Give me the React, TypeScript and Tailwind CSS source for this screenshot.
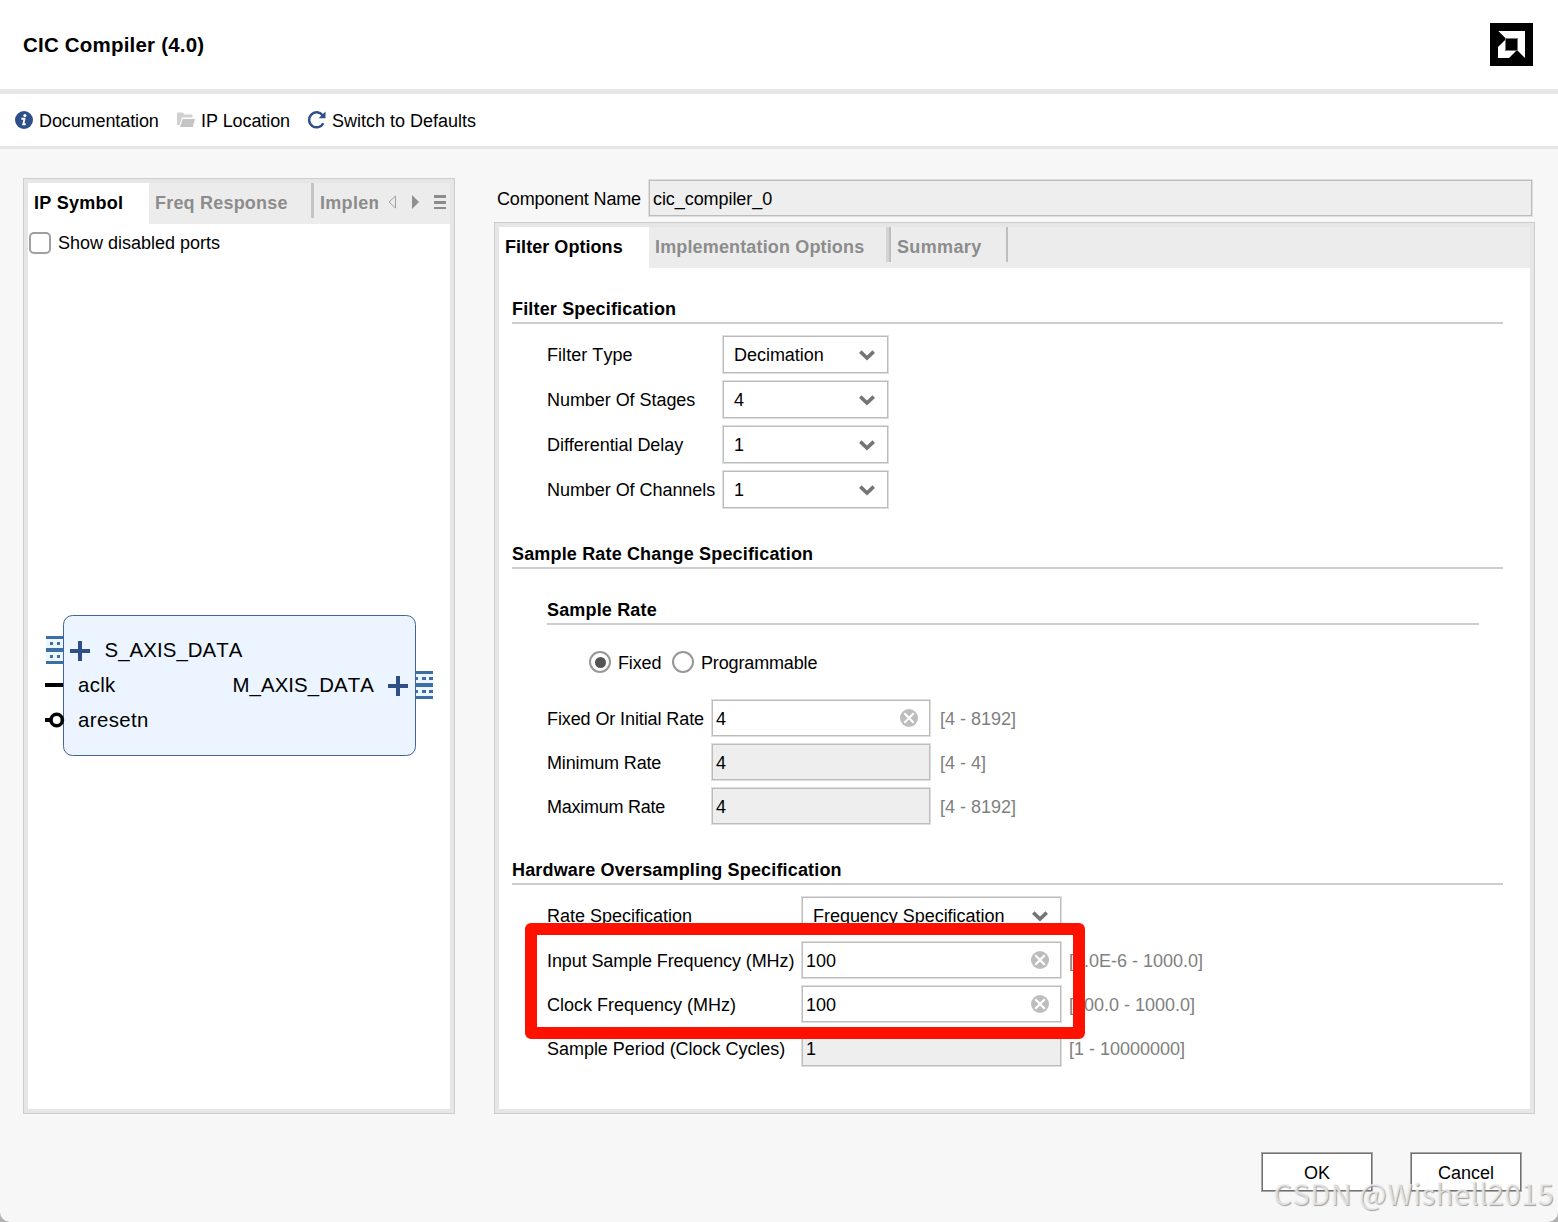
import type { ReactNode } from "react";

const BOX = "border border-[#dedede] shadow-[inset_0_0_0_1px_#bcbcbc]";

function Chevron() {
	return (
		<svg width="17" height="12" viewBox="0 0 17 12" className="shrink-0">
			<path d="M1.3 2.6 8 9 14.7 2.6" fill="none" stroke="#757575" strokeWidth="3.6" />
		</svg>
	);
}

function ClearIcon() {
	return (
		<svg width="18" height="18" viewBox="0 0 18 18" className="shrink-0">
			<circle cx="9" cy="9" r="9" fill="#bdbdbd" />
			<path d="M4.3 4.3 13.7 13.7M13.7 4.3 4.3 13.7" stroke="#fff" strokeWidth="2.1" />
		</svg>
	);
}

function Select({ value, className }: { value: string; className: string }) {
	return (
		<div className={`flex h-[39px] items-center justify-between bg-white pl-[11px] pr-[12px] ${BOX} ${className}`}>
			<span className="tracking-[-0.03px]">{value}</span>
			<Chevron />
		</div>
	);
}

function Field({ value, disabled, className }: { value: string; disabled?: boolean; className: string }) {
	return (
		<div
			className={`flex h-[38px] items-center justify-between pl-1 pr-[12px] ${BOX} ${disabled ? "bg-[#eeeeee]" : "bg-white"} ${className}`}
		>
			<span className="pt-[2px]">{value}</span>
			{!disabled && <ClearIcon />}
		</div>
	);
}

function Row({ label, width, range, children }: { label: string; width: string; range?: string; children: ReactNode }) {
	return (
		<div className="flex items-center">
			<span className={`shrink-0 whitespace-nowrap ${width}`}>{label}</span>
			{children}
			{range && <span className="pl-[9px] pt-[2px] text-[#808080]">{range}</span>}
		</div>
	);
}

function Title({ children, className }: { children: ReactNode; className: string }) {
	return (
		<h2 className={`h-[29px] border-b-2 border-[#cdcdcd] font-bold leading-[29px] tracking-[0.16px] ${className}`}>{children}</h2>
	);
}

function AmdLogo() {
	return (
		<svg width="43" height="43" viewBox="0 0 43 43">
			<rect width="43" height="43" fill="#000" />
			<path d="M8.3 8H35V35L27.5 27.5V15.3H15.6Z" fill="#fff" />
			<path d="M8 24 15.6 16.4V27.5H26.5L19 35H8Z" fill="#fff" />
			<rect x="15.5" y="15.5" width="12" height="12" fill="#000" stroke="#777" />
		</svg>
	);
}

function Toolbar() {
	return (
		<div className="flex h-[55px] items-center border-b-[3px] border-[#e6e6e6] bg-white pl-[15px]">
			<svg width="18" height="18" viewBox="0 0 18 18">
				<circle cx="9" cy="9" r="9" fill="#2f4f8a" />
				<circle cx="9.9" cy="4.5" r="1.6" fill="#fff" />
				<path d="M6.3 7.7H9.5L8.3 13.3H10.7" fill="none" stroke="#fff" strokeWidth="1.9" />
			</svg>
			<span className="ml-[6px] w-[138px] pt-[2px] tracking-[-0.1px]">Documentation</span>
			<svg width="18" height="16" viewBox="0 0 18 16">
				<path d="M0 1.5Q0 .5 1 .5H5.5L7.5 2.5H14.5Q15.5 2.5 15.5 3.5V5.5H5L2.5 13H1Q0 13 0 12Z" fill="#d0d0d0" />
				<path d="M5.7 7H18L15.8 15H3Z" fill="#c4c4c4" />
			</svg>
			<span className="ml-[6px] w-[106px] pt-[2px] tracking-[-0.1px]">IP Location</span>
			<svg width="20" height="20" viewBox="0 0 20 20">
				<path d="M15.6 5.3A7.5 7.5 0 1 0 16.3 13.2" fill="none" stroke="#2f4f8a" strokeWidth="2.5" />
				<path d="M18.5 1.6V8.2H11.6Z" fill="#2f4f8a" />
			</svg>
			<span className="ml-[5px] pt-[2px]">Switch to Defaults</span>
		</div>
	);
}

function IpSymbol() {
	return (
		<svg width="392" height="142" viewBox="0 0 392 142" className="ml-4 mt-[362px]" fontSize="20.4" fill="#000">
			<rect x="19.5" y=".5" width="352" height="140" rx="9" fill="#ecf5ff" stroke="#41639f" />
			<g fill="#edf5fd">
				<rect x="2" y="21" width="17" height="28" />
				<rect x="372" y="56" width="17" height="28" />
			</g>
			<g stroke="#3d6fa5" strokeWidth="3">
				<path d="M2 22.5H19M2 47.5H19M372 57.5H389M372 82.5H389" />
				<path d="M2 35H19M372 70H389" strokeWidth="4" />
				<path d="M6 28.5H9M13 28.5H16M6 41.5H9M13 41.5H16" />
				<path d="M372 63.5H374M378 63.5H382M385 63.5H389M372 76.5H374M378 76.5H382M385 76.5H389" />
			</g>
			<path d="M26 36H46M36 26V46M344 71H364M354 61V81" stroke="#314f87" strokeWidth="4" />
			<path d="M1 70H19M1 105H7" stroke="#000" strokeWidth="4" />
			<circle cx="12.7" cy="105" r="5.7" fill="#fff" stroke="#000" strokeWidth="3.6" />
			<text x="60.5" y="42" className="tracking-[0.08px]">S_AXIS_DATA</text>
			<text x="34" y="77" className="tracking-[0.3px]">aclk</text>
			<text x="188.5" y="77" className="tracking-[0.08px]">M_AXIS_DATA</text>
			<text x="34" y="112" className="tracking-[0.4px]">aresetn</text>
		</svg>
	);
}

function LeftPanel() {
	return (
		<section className="h-[936px] w-[432px] border border-[#cdcdcd] bg-[#e6e6e6] p-1">
			<div className="h-full bg-white">
				<div className="flex h-[41px] bg-[#ececec] font-bold leading-[41px] text-[#8c8c8c]">
					<div className="w-[121px] bg-white pl-[6px] tracking-[0.25px] text-black">IP Symbol</div>
					<div className="h-[35px] w-[165px] border-r-[3px] border-[#c3c3c3] pl-[6px] tracking-[0.2px] whitespace-nowrap">Freq Response</div>
					<div className="ml-[6px] w-[58px] overflow-hidden tracking-[0.3px]">Implementation</div>
					<svg width="58" height="14" viewBox="0 0 58 14" className="ml-[10px] mt-3">
						<path d="M7.5 1V13L1 7Z" fill="none" stroke="#a0a0a0" />
						<path d="M24 0 31 7 24 14Z" fill="#8f8f8f" />
						<path d="M46 1.5H58M46 7.5H58M46 13.5H58" stroke="#8c8c8c" strokeWidth="3" />
					</svg>
				</div>
				<label className="flex h-[37px] items-center pl-[1px]">
					<span className="h-[22px] w-[22px] rounded-[5px] border-2 border-[#a0a0a0] bg-white" />
					<span className="ml-[7px]">Show disabled ports</span>
				</label>
				<div className="-mt-[8px]">
					<IpSymbol />
				</div>
			</div>
		</section>
	);
}

function RightPanel() {
	return (
		<section className="h-[892px] border border-[#cdcdcd] bg-[#e6e6e6] p-1">
			<div className="h-full bg-white">
				<div className="flex h-[41px] bg-[#ececec] font-bold leading-[41px] tracking-[0.15px] text-[#8c8c8c]">
					<div className="w-[150px] bg-white pl-[6px] tracking-[0.05px] text-black">Filter Options</div>
					<div className="h-[35px] w-[240px] border-r-[3px] border-[#d4d4d4] pl-[6px]">Implementation Options</div>
					<div className="h-[35px] w-[119px] border-x-2 border-[#bebebe] pl-[6px] tracking-[0.35px]">Summary</div>
				</div>
				<div className="pl-[13px] pr-[27px] pt-[27px]">
					<Title className="">Filter Specification</Title>
					<div className="mt-[11px] flex flex-col gap-[6px] pl-[35px] tracking-[-0.05px]">
						<Row label="Filter Type" width="w-[175px] tracking-[0.05px]"><Select value="Decimation" className="w-[167px]" /></Row>
						<Row label="Number Of Stages" width="w-[175px]"><Select value="4" className="w-[167px]" /></Row>
						<Row label="Differential Delay" width="w-[175px]"><Select value="1" className="w-[167px]" /></Row>
						<Row label="Number Of Channels" width="w-[175px]"><Select value="1" className="w-[167px]" /></Row>
					</div>

					<Title className="mt-[31px]">Sample Rate Change Specification</Title>
					<Title className="ml-[35px] mr-6 mt-[27px]">Sample Rate</Title>
					<div className="ml-[77px] mt-[26px] flex h-[22px] items-center tracking-[-0.15px]">
						<span className="flex h-[22px] w-[22px] items-center justify-center rounded-full border-2 border-[#979797]">
							<span className="h-[11px] w-[11px] rounded-full bg-[#545454]" />
						</span>
						<span className="ml-[7px] w-[54px] pt-[2px]">Fixed</span>
						<span className="h-[22px] w-[22px] rounded-full border-2 border-[#979797]" />
						<span className="ml-[7px] pt-[2px]">Programmable</span>
					</div>
					<div className="mt-[26px] flex flex-col gap-[6px] pl-[35px]">
						<Row label="Fixed Or Initial Rate" width="w-[164px] pt-[2px] tracking-[-0.1px]" range="[4 - 8192]"><Field value="4" className="w-[220px]" /></Row>
						<Row label="Minimum Rate" width="w-[164px] pt-[2px] tracking-[-0.15px]" range="[4 - 4]"><Field value="4" disabled className="w-[220px]" /></Row>
						<Row label="Maximum Rate" width="w-[164px] pt-[2px] tracking-[-0.25px]" range="[4 - 8192]"><Field value="4" disabled className="w-[220px]" /></Row>
					</div>

					<Title className="mt-[31px]">Hardware Oversampling Specification</Title>
					<div className="relative mt-[11px] flex flex-col gap-[6px] pl-[35px]">
						<Row label="Rate Specification" width="w-[254px]"><Select value="Frequency Specification" className="w-[261px]" /></Row>
						<Row label="Input Sample Frequency (MHz)" width="w-[254px] pt-[2px] tracking-[-0.1px]" range="[1.0E-6 - 1000.0]"><Field value="100" className="mr-[-2px] w-[261px]" /></Row>
						<Row label="Clock Frequency (MHz)" width="w-[254px] pt-[2px]" range="[100.0 - 1000.0]"><Field value="100" className="mr-[-2px] w-[261px]" /></Row>
						<Row label="Sample Period (Clock Cycles)" width="w-[254px] pt-[2px] tracking-[-0.03px]" range="[1 - 10000000]"><Field value="1" disabled className="mr-[-2px] w-[261px]" /></Row>
						{/* highlight around the two frequency rows */}
						<div className="absolute left-[13px] top-[27px] h-[116px] w-[560px] rounded-md border-[12px] border-[#ff1100]" />
					</div>
				</div>
			</div>
		</section>
	);
}

function Button({ children }: { children: ReactNode }) {
	return (
		<button className="h-[40px] w-[112px] border border-[#a8a8a8] bg-white pt-[2px] shadow-[inset_0_0_0_1px_#707070]">{children}</button>
	);
}

export default function App() {
	return (
		<div className="h-[1222px] w-[1558px] overflow-hidden bg-[#b0b0b0] font-['Liberation_Sans',Arial,sans-serif] text-[18px] leading-[22px] text-black [font-kerning:none]">
			<div className="relative flex h-full flex-col overflow-hidden rounded-b-[10px] bg-[#f7f7f7]">
				<header className="flex h-[94px] items-center justify-between border-b-[5px] border-[#e6e6e6] bg-white pl-[23px] pr-[25px]">
					<h1 className="text-[20.5px] font-bold tracking-[0.2px]">CIC Compiler (4.0)</h1>
					<AmdLogo />
				</header>
				<Toolbar />
				<main className="flex pl-[23px] pr-[23px] pt-[29px]">
					<LeftPanel />
					<div className="ml-[39px] flex-1">
						<div className="flex h-[44px] items-start pl-[3px] pr-[2px] pt-[1px]">
							<span className="w-[151px] leading-[40px] tracking-[-0.15px]">Component Name</span>
							<Field value="cic_compiler_0" disabled className="flex-1 tracking-[-0.07px]" />
						</div>
						<RightPanel />
					</div>
				</main>
				<footer className="mt-[38px] flex justify-end gap-[37px] pr-[36px]">
					<Button>OK</Button>
					<Button>Cancel</Button>
				</footer>
				<div className="absolute bottom-[13px] right-[4px] font-['Noto_Sans_CJK_SC','Noto_Sans',sans-serif] text-[29px] font-normal leading-[34px] tracking-[0.5px] text-[#ededed]/80 [text-shadow:1px_1px_1px_#a0a0a0]">
					CSDN @Wishell2015
				</div>
			</div>
		</div>
	);
}
